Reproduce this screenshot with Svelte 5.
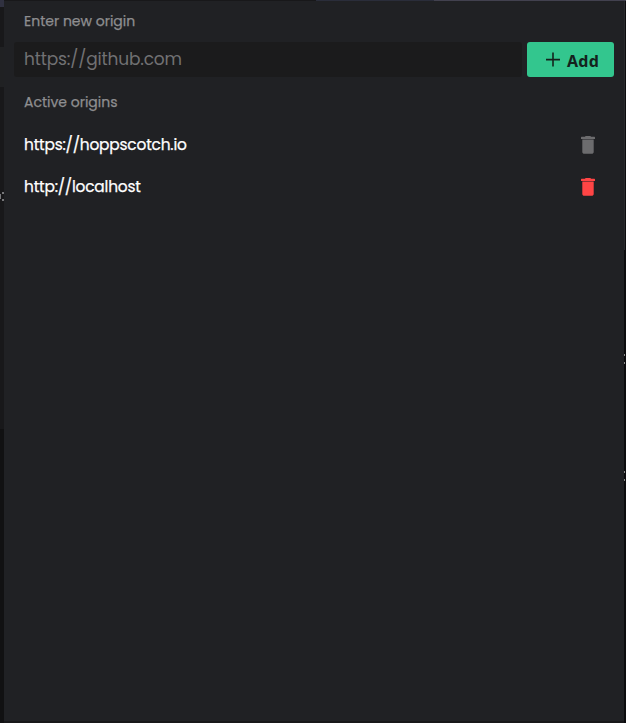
<script>
  const origins = [
    { url: 'https://hoppscotch.io', kind: 'fixed' },
    { url: 'http://localhost', kind: 'removable' }
  ];
</script>

<div class="page">
  <div class="edge left">
    <i class="tab"></i><i class="band"></i><i class="low"></i>
    <svg class="peek" viewBox="0 0 4 12"><path d="M0 3h1v5H0zM2 1h2v2H2zM2 8h2v2H2z" /></svg>
  </div>
  <div class="edge top"><i class="navy"></i><i class="violet"></i></div>
  <div class="edge right"><i class="rail"></i><b class="first"></b><b class="second"></b></div>
  <main>
    <label class="new" for="origin">Enter new origin</label>
    <div class="entry">
      <input id="origin" placeholder="https://github.com" />
      <button class="add">
        <svg viewBox="0 0 24 24"><path d="M19 12.4h-6.2v6.2h-1.6v-6.2H5v-1.6h6.2V4.6h1.6v6.2H19z" /></svg>
        <span>Add</span>
      </button>
    </div>
    <h2>Active origins</h2>
    <ul>
      {#each origins as origin}
        <li class={origin.kind}>
          <span>{origin.url}</span>
          <svg viewBox="0 0 24 24"><path d="M6.3 6.5h11.4V19c0 1.1-.9 1.8-2 1.8H8.3c-1.1 0-2-.7-2-1.8zM9.3 3h5.4v.7h3.7q.6 0 .6.7v1.5H5V4.4q0-.7.6-.7h3.7z" /></svg>
        </li>
      {/each}
    </ul>
  </main>
</div>

<style>
  :global(body) { background: #121213; overflow: hidden; }
  .page { position: relative; box-sizing: border-box; width: 626px; height: 723px; padding: 1px 2px 2px 4px; background: #18181a; font-family: Poppins, Inter, sans-serif; overflow: hidden; }
  main { box-sizing: border-box; height: 720px; padding: 10px 10px 0; background: #202124; }
  .new, h2 { display: block; margin: 0; padding-left: 10px; height: 20px; font-size: 14px; line-height: 20px; font-weight: 400; color: #8e8e90; white-space: nowrap; -webkit-text-stroke: .25px; }
  .entry { display: flex; gap: 5px; height: 35px; margin-top: 11px; }
  input { box-sizing: border-box; width: 508px; height: 35px; border: 0; border-radius: 3px; padding: 0 10px; background: #1b1b1c; color: #fff; font: 400 17px/35px Poppins, Inter, sans-serif; letter-spacing: -.16px; outline: 0; }
  input::placeholder { color: #717173; opacity: 1; }
  .add { display: flex; align-items: center; width: 87px; height: 35px; padding: 0 0 0 14px; border: 0; border-radius: 3px; background: #33c68e; color: #14231d; font: 700 16px/24px "Noto Sans", sans-serif; letter-spacing: .3px; }
  .add svg { width: 24px; height: 24px; margin-right: 2px; fill: currentColor; }
  .add span { padding-top: 3px; }
  h2 { margin-top: 15px; }
  ul { list-style: none; margin: 12px 0 0; padding: 0 14px 0 10px; }
  li { display: flex; align-items: center; justify-content: space-between; height: 42px; color: #fff; font-size: 15.4px; line-height: 24px; font-weight: 400; letter-spacing: -.2px; -webkit-text-stroke: .25px; }
  li svg { width: 24px; height: 24px; fill: #6c6c6e; }
  .removable svg { fill: #ff4545; }
  .edge, .edge i, .edge b { position: absolute; }
  .left { left: 0; top: 0; width: 4px; height: 723px; background: #18181a; overflow: hidden; }
  .tab { top: 0; width: 4px; height: 7px; background: #303140; }
  .band { top: 47px; width: 4px; height: 40px; background: #202123; }
  .low { top: 429px; width: 4px; height: 294px; background: #111112; }
  .peek { position: absolute; left: 0; top: 191px; width: 4px; height: 12px; fill: #77777a; }
  .top { left: 0; top: 0; width: 626px; height: 1px; }
  .navy { left: 316px; width: 118px; height: 1px; background: #2a2d3a; }
  .violet { left: 434px; width: 192px; height: 1px; background: #42414f; }
  .right { right: 0; top: 1px; width: 2px; height: 722px; background: #0c0c0e; }
  .rail { right: 1px; width: 1px; height: 249px; background: #292a2d; }
  .right b { left: 0; width: 1px; height: 2px; background: #8a8a8a; box-shadow: 0 8px #8a8a8a; }
  .first { top: 353px; }
  .second { top: 470px; }
</style>
